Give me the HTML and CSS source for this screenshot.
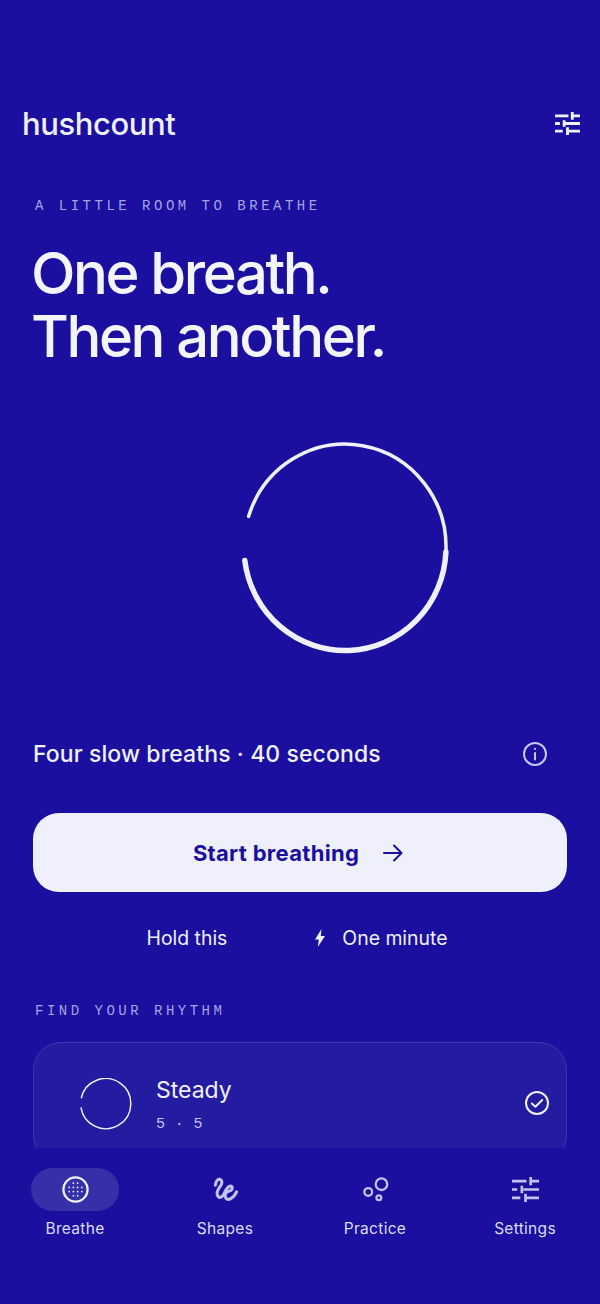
FILE: index.html
```html
<!DOCTYPE html>
<html lang="en">
<head>
    <meta charset="UTF-8">
    <meta name="viewport" content="width=device-width, initial-scale=1.0">
    <title>hushcount</title>
    <link rel="stylesheet" href="styles.css">
</head>
<body>
    <div class="scroll">
        <header class="topbar">
            <span class="logo">hushcount</span>
            <svg class="top-icon" viewBox="0 0 26 24" fill="none" stroke="currentColor" stroke-width="3">
                <path d="M0 4h14M19 4h7M18 0v8M0 12h5M11 12h15M9.500 8.500v7M0 20h8M13 20h13M13 16v8"/>
            </svg>
        </header>

        <section class="hero">
            <p class="eyebrow">A LITTLE ROOM TO BREATHE</p>
            <h1>One breath.<br>Then another.</h1>
        </section>

        <div class="ring-wrap">
            <svg class="ring" viewBox="0 0 220 220" fill="none" stroke="#eff0fb" stroke-linecap="round">
                <path stroke-width="3.500" d="M13.600 79.400A101 103 0 0 1 210.900 115"/>
                <path stroke-width="5.500" d="M210.900 115A101 103 0 0 1 9.800 123.500"/>
            </svg>
        </div>

        <div class="summary">
            <span>Four slow breaths · 40 seconds</span>
            <svg class="info" viewBox="0 0 24 24" fill="none" stroke="currentColor" stroke-width="2" stroke-linecap="round">
                <circle cx="12" cy="12" r="11"/>
                <path d="M12 11v6.500M12 6.800v.2"/>
            </svg>
        </div>

        <button class="start-btn">
            <span>Start breathing</span>
            <svg class="arrow" viewBox="0 0 20 18" fill="none" stroke="currentColor" stroke-width="2" stroke-linecap="round" stroke-linejoin="round">
                <path d="M1 9h17M11 1.500 18.500 9 11 16.500"/>
            </svg>
        </button>

        <div class="hold-row">
            <span>Hold this</span>
            <span class="hold-time">
                <svg class="bolt" viewBox="0 0 12 18" fill="currentColor"><path d="M7.500 0 1 10.500h3.800L3.800 18 11 7H6.800z"/></svg>
                One minute
            </span>
        </div>

        <p class="eyebrow rhythm-label">FIND YOUR RHYTHM</p>

        <div class="card">
            <svg class="card-ring" viewBox="0 0 56 56" fill="none" stroke="#eff0fb" stroke-width="1.500">
                <path d="M2.300 21A26 26 0 1 1 2 30.500"/>
            </svg>
            <div class="card-text">
                <div class="card-title">Steady</div>
                <div class="card-sub">5 · 5</div>
            </div>
            <svg class="check" viewBox="0 0 24 24" fill="none" stroke="currentColor" stroke-width="2" stroke-linecap="round" stroke-linejoin="round">
                <circle cx="12" cy="12" r="11"/>
                <path d="M6.800 12.500l3.600 3.200 6.800-6.700"/>
            </svg>
        </div>
    </div>

    <nav class="tabs">
        <a class="tab tab-active">
            <span class="tab-icon">
                <svg viewBox="0 0 28 28" fill="none" stroke="currentColor">
                    <circle cx="14" cy="14" r="12.500" stroke-width="2.400"/>
                    <path stroke-width="1.800" stroke-linecap="round" d="M11.800 7.400h.01M16.200 7.400h.01M7.400 11.800h.01M11.800 11.800h.01M16.200 11.800h.01M20.600 11.800h.01M7.400 16.200h.01M11.800 16.200h.01M16.200 16.200h.01M20.600 16.200h.01M11.800 20.600h.01M16.200 20.600h.01"/>
                </svg>
            </span>
            Breathe
        </a>
        <a class="tab">
            <span class="tab-icon">
                <svg viewBox="0 0 28 28" fill="none" stroke="currentColor" stroke-width="3.200" stroke-linecap="round" stroke-linejoin="round">
                    <path d="M3.500 9.500C4 5.500 6 3 8 3.500 10.500 4 11 7 9 10 6.500 13.500 4.500 16 5.500 19.500 6.500 23 9.500 23 11.500 20 13.500 17 15.500 10.500 19 10.500 22.500 10.500 21 15 18 15.500 14 16.500 12.500 20 14.500 23 16.500 25.500 22 24 25.500 16.500"/>
                </svg>
            </span>
            Shapes
        </a>
        <a class="tab">
            <span class="tab-icon">
                <svg viewBox="0 0 28 28" fill="none" stroke="currentColor" stroke-width="2.400">
                    <circle cx="20.200" cy="8.500" r="6"/>
                    <circle cx="6.500" cy="16.500" r="4"/>
                    <circle cx="17.500" cy="22.500" r="2.500"/>
                </svg>
            </span>
            Practice
        </a>
        <a class="tab">
            <span class="tab-icon">
                <svg viewBox="0 0 26 24" fill="none" stroke="currentColor" stroke-width="2.600">
                    <path d="M0 4h14M19 4h7M18 0v8M0 12h5M11 12h15M9.500 8.500v7M0 20h8M13 20h13M13 16v8"/>
                </svg>
            </span>
            Settings
        </a>
    </nav>
</body>
</html>
```

FILE: styles.css
```css
* {
    box-sizing: border-box;
}
body {
    margin: 0;
    height: 1304px;
    display: flex;
    flex-direction: column;
    overflow: hidden;
    background-color: #1a0f9f;
    color: #eff0fb;
    font-family: Inter, "Noto Sans", sans-serif;
}
.scroll {
    height: 1148px;
    padding: 0 33px;
    overflow: hidden;
}
.topbar {
    display: flex;
    justify-content: space-between;
    align-items: center;
    margin: 104px -13px 0 -11px;
    height: 38px;
}
.logo {
    font-size: 31px;
    font-weight: 500;
    letter-spacing: -.4px;
}
.top-icon {
    width: 25px;
    height: 23px;
}
.hero {
    margin-top: 55px;
}
.eyebrow {
    margin: 0 0 0 2px;
    font-family: "Liberation Mono", monospace;
    font-size: 14px;
    line-height: 18px;
    letter-spacing: 3.500px;
    color: #a5a3e6;
}
h1 {
    margin: 27px 0 0 -2px;
    font-size: 58px;
    font-weight: 500;
    line-height: 63px;
    letter-spacing: -2.400px;
    color: #f4f4fd;
}
.ring-wrap {
    display: flex;
    justify-content: center;
    margin-top: 69px;
    padding-left: 90px;
}
.ring {
    width: 220px;
    height: 220px;
}
.summary {
    display: flex;
    justify-content: space-between;
    align-items: center;
    margin-top: 81px;
    padding-right: 20px;
    font-size: 23px;
    font-weight: 500;
    letter-spacing: .1px;
    height: 32px;
}
.info {
    width: 24px;
    height: 24px;
    color: #c9c8ef;
}
.start-btn {
    display: flex;
    justify-content: center;
    align-items: center;
    gap: 24px;
    width: 100%;
    height: 79px;
    margin-top: 43px;
    padding: 0 4px 0 0;
    border: none;
    border-radius: 26px;
    background-color: #eff0fb;
    color: #1a0f9f;
    font-family: inherit;
    font-size: 22px;
    font-weight: 700;
    letter-spacing: .3px;
}
.arrow {
    width: 20px;
    height: 18px;
}
.hold-row {
    display: flex;
    justify-content: center;
    align-items: center;
    gap: 87px;
    margin-top: 32px;
    padding-right: 6px;
    height: 28px;
    font-size: 19.400px;
}
.hold-time {
    display: flex;
    align-items: center;
    gap: 16px;
}
.bolt {
    width: 12px;
    height: 18px;
}
.rhythm-label {
    margin-top: 50px;
}
.card {
    display: flex;
    align-items: center;
    height: 122px;
    margin-top: 22px;
    padding: 0 17px 0 45px;
    border: 1px solid #3d36ae;
    border-radius: 28px;
    background-color: #231ca1;
}
.card-ring {
    width: 54px;
    height: 54px;
    margin-top: 3px;
}
.card-text {
    flex: 1;
    margin-left: 23px;
    padding-top: 3px;
}
.card-title {
    font-size: 23px;
    line-height: 30px;
}
.card-sub {
    margin-top: 11px;
    font-family: "Liberation Mono", monospace;
    font-size: 15px;
    line-height: 18px;
    letter-spacing: .4px;
    color: #c2c0ee;
}
.check {
    width: 24px;
    height: 24px;
}
.tabs {
    display: grid;
    grid-template-columns: repeat(4, 1fr);
    padding-top: 20px;
}
.tab {
    display: flex;
    flex-direction: column;
    align-items: center;
    font-size: 15.500px;
    letter-spacing: .3px;
    color: #dcdcf7;
}
.tab-icon {
    display: flex;
    justify-content: center;
    align-items: center;
    width: 88px;
    height: 43px;
    margin-bottom: 8px;
    border-radius: 22px;
    color: #c3c1ee;
}
.tab-icon svg {
    width: 27px;
    height: 27px;
}
.tab-active .tab-icon {
    background-color: #352fa8;
    color: #eff0fb;
}
```
